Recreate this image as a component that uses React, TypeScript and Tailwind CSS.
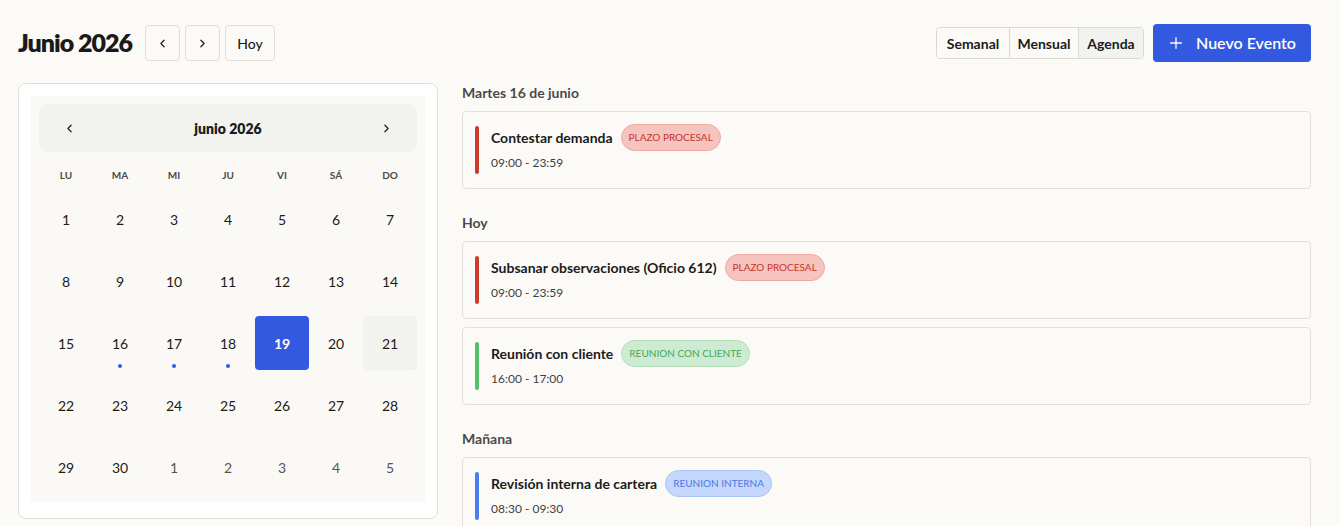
import React from "react";

const font = { fontFamily: "Lato, 'Noto Sans', sans-serif" };

function ChevronLeft({ className = "" }: { className?: string }) {
  return (
    <svg viewBox="0 0 24 24" className={className} fill="none" stroke="currentColor" strokeWidth={2.2} strokeLinecap="round" strokeLinejoin="round">
      <path d="M15 18l-6-6 6-6" />
    </svg>
  );
}
function ChevronRight({ className = "" }: { className?: string }) {
  return (
    <svg viewBox="0 0 24 24" className={className} fill="none" stroke="currentColor" strokeWidth={2.2} strokeLinecap="round" strokeLinejoin="round">
      <path d="M9 18l6-6-6-6" />
    </svg>
  );
}

type Day = { n: number; muted?: boolean; dot?: boolean; selected?: boolean; hover?: boolean };

const weeks: Day[][] = [
  [1, 2, 3, 4, 5, 6, 7].map((n) => ({ n })),
  [8, 9, 10, 11, 12, 13, 14].map((n) => ({ n })),
  [
    { n: 15 },
    { n: 16, dot: true },
    { n: 17, dot: true },
    { n: 18, dot: true },
    { n: 19, selected: true },
    { n: 20 },
    { n: 21, hover: true },
  ],
  [22, 23, 24, 25, 26, 27, 28].map((n) => ({ n })),
  [
    { n: 29 },
    { n: 30 },
    { n: 1, muted: true },
    { n: 2, muted: true },
    { n: 3, muted: true },
    { n: 4, muted: true },
    { n: 5, muted: true },
  ],
];

type Ev = { title: string; time: string; tag: string; kind: "red" | "green" | "blue" };

const sections: { label: string; events: Ev[] }[] = [
  { label: "Martes 16 de junio", events: [{ title: "Contestar demanda", time: "09:00 - 23:59", tag: "PLAZO PROCESAL", kind: "red" }] },
  {
    label: "Hoy",
    events: [
      { title: "Subsanar observaciones (Oficio 612)", time: "09:00 - 23:59", tag: "PLAZO PROCESAL", kind: "red" },
      { title: "Reunión con cliente", time: "16:00 - 17:00", tag: "REUNION CON CLIENTE", kind: "green" },
    ],
  },
  { label: "Mañana", events: [{ title: "Revisión interna de cartera", time: "08:30 - 09:30", tag: "REUNION INTERNA", kind: "blue" }] },
];

function EventCard({ ev }: { ev: Ev }) {
  const bar = ev.kind === "red" ? "bg-[#cf3b2a]" : ev.kind === "green" ? "bg-[#55c06a]" : "bg-[#4a7df0]";
  const badge =
    ev.kind === "red"
      ? "bg-[#f5c4be] border-[#eeaaa2] text-[#c9342a]"
      : ev.kind === "green"
      ? "bg-[#cdebd2] border-[#b2dfba] text-[#43a957]"
      : "bg-[#c5d7fb] border-[#a9c3f7] text-[#4a78e6]";
  return (
    <div className="flex h-[78px] items-center rounded border border-[#e3e0db] bg-[#fbfaf7] pl-[12px]">
      <div className={`h-[48px] w-[4px] rounded-full ${bar}`} />
      <div className="ml-[12px] flex flex-col pb-[5px]">
        <div className="flex items-center">
          <span className="text-[14px] font-bold text-[#1b1b1b]">{ev.title}</span>
          <span className={`ml-[8px] flex h-[27px] items-center rounded-full border px-[7px] text-[10px] ${badge}`}>{ev.tag}</span>
        </div>
        <span className="mt-[4px] text-[12px] leading-[16px] text-[#3f3f3f]">{ev.time}</span>
      </div>
    </div>
  );
}

export default function App() {
  return (
    <div className="min-h-[526px] w-full bg-[#fbfaf7] pl-[18px] pr-[29px] pt-[24px] text-[#1b1b1b]" style={font}>
      {/* Header */}
      <div className="flex h-[38px] items-center justify-between">
        <div className="flex items-center">
          <h1 className="text-[25px] font-extrabold tracking-[-0.04em] text-[#1a1a1a]">Junio 2026</h1>
          <div className="ml-[13px] flex gap-[5px]">
            <button className="flex h-[36px] w-[35px] items-center justify-center rounded border border-[#e2dfda] bg-[#fbfaf7] text-[#1b1b1b]">
              <ChevronLeft className="h-[13px] w-[13px]" />
            </button>
            <button className="flex h-[36px] w-[35px] items-center justify-center rounded border border-[#e2dfda] bg-[#fbfaf7] text-[#1b1b1b]">
              <ChevronRight className="h-[13px] w-[13px]" />
            </button>
            <button className="flex h-[36px] w-[50px] items-center justify-center rounded border border-[#e2dfda] bg-[#fbfaf7] text-[14px] font-medium">
              Hoy
            </button>
          </div>
        </div>
        <div className="flex items-center">
          <div className="flex h-[32px] overflow-hidden rounded border border-[#dcd9d4] text-[14px] font-bold">
            <div className="flex w-[72px] items-center justify-center bg-[#fbfaf7]">Semanal</div>
            <div className="flex w-[69px] items-center justify-center border-l border-[#dcd9d4] bg-[#fbfaf7]">Mensual</div>
            <div className="flex w-[65px] items-center justify-center border-l border-[#dcd9d4] bg-[#f2f2ee]">Agenda</div>
          </div>
          <button className="ml-[9px] flex h-[38px] w-[158px] items-center justify-center gap-[12px] rounded bg-[#3359e0] text-[16px] font-semibold text-white">
            <svg viewBox="0 0 24 24" className="h-[16px] w-[16px]" fill="none" stroke="currentColor" strokeWidth={2} strokeLinecap="round">
              <path d="M12 4v16M4 12h16" />
            </svg>
            Nuevo Evento
          </button>
        </div>
      </div>

      {/* Body */}
      <div className="mt-[21px] flex items-start gap-[24px]">
        {/* Mini calendar */}
        <div className="w-[420px] shrink-0 rounded-lg border border-[#e3e0db] bg-white px-[12px] pb-[16px] pt-[12px]">
          <div className="bg-[#faf9f5] p-[8px]">
            <div className="flex h-[48px] items-center justify-between rounded-lg bg-[#f2f2ee] px-[24px]">
              <ChevronLeft className="h-[13px] w-[13px]" />
              <span className="text-[14px] font-extrabold">junio 2026</span>
              <ChevronRight className="h-[13px] w-[13px]" />
            </div>
            <div className="mt-[14px] grid h-[18px] grid-cols-7 items-center text-center text-[10px] font-bold text-[#4a4a4a]">
              {["LU", "MA", "MI", "JU", "VI", "SÁ", "DO"].map((d) => (
                <span key={d}>{d}</span>
              ))}
            </div>
            <div className="mt-[8px] flex flex-col gap-[8px]">
              {weeks.map((w, i) => (
                <div key={i} className="grid grid-cols-7">
                  {w.map((d, j) => (
                    <div
                      key={j}
                      className={`relative flex h-[54px] items-center justify-center rounded text-[14px] ${
                        d.selected
                          ? "bg-[#3359e0] font-bold text-white"
                          : d.hover
                          ? "bg-[#f2f2ee] text-[#1b1b1b]"
                          : d.muted
                          ? "text-[#555555]"
                          : "text-[#1b1b1b]"
                      }`}
                    >
                      {d.n}
                      {d.dot && <span className="absolute bottom-[2px] h-[4px] w-[4px] rounded-full bg-[#3359e0]" />}
                    </div>
                  ))}
                </div>
              ))}
            </div>
          </div>
        </div>

        {/* Agenda */}
        <div className="flex flex-1 flex-col gap-[24px]">
          {sections.map((s) => (
            <div key={s.label} className="flex flex-col">
              <h2 className="h-[20px] text-[14px] font-bold leading-[20px] text-[#4a4a4a]">{s.label}</h2>
              <div className="mt-[8px] flex flex-col gap-[8px]">
                {s.events.map((ev) => (
                  <EventCard key={ev.title} ev={ev} />
                ))}
              </div>
            </div>
          ))}
        </div>
      </div>
    </div>
  );
}
